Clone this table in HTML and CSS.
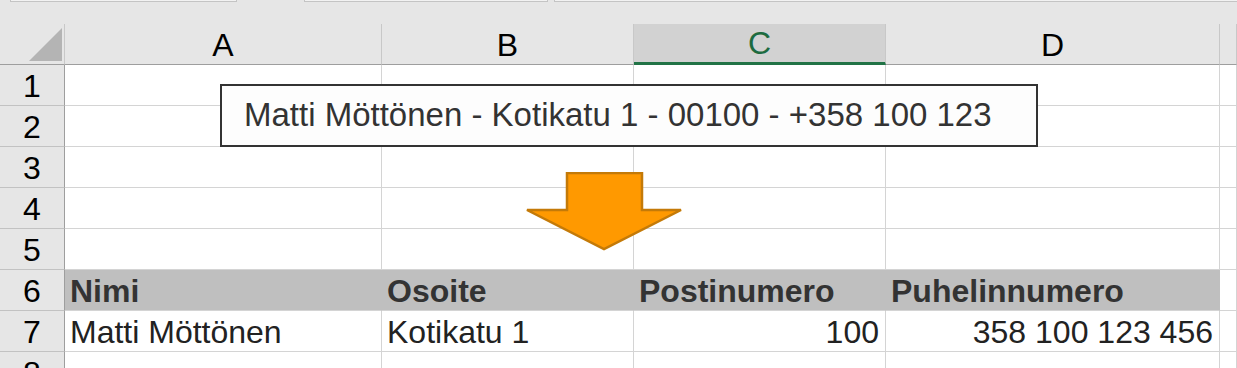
FILE: index.html
```html
<!DOCTYPE html>
<html lang="fi">
<head>
    <meta charset="UTF-8">
    <meta name="viewport" content="width=device-width, initial-scale=1.0">
    <title>Tekstin jakaminen sarakkeisiin</title>
    <link rel="stylesheet" href="styles.css">
</head>
<body>
    <div class="ribbon">
        <div class="field name-box"></div>
        <div class="field func-box"></div>
        <div class="field formula-box"></div>
    </div>
    <div class="sheet">
        <div class="grid">
            <!-- column headers -->
            <div class="corner"><span class="corner-mark"></span></div>
            <div class="col-head">A</div>
            <div class="col-head">B</div>
            <div class="col-head selected">C</div>
            <div class="col-head">D</div>
            <div class="col-head"></div>

            <div class="row-head">1</div>
            <div class="cell"></div><div class="cell"></div><div class="cell"></div><div class="cell"></div><div class="cell"></div>

            <div class="row-head">2</div>
            <div class="cell"></div><div class="cell"></div><div class="cell"></div><div class="cell"></div><div class="cell"></div>

            <div class="row-head">3</div>
            <div class="cell"></div><div class="cell"></div><div class="cell"></div><div class="cell"></div><div class="cell"></div>

            <div class="row-head">4</div>
            <div class="cell"></div><div class="cell"></div><div class="cell"></div><div class="cell"></div><div class="cell"></div>

            <div class="row-head">5</div>
            <div class="cell"></div><div class="cell"></div><div class="cell"></div><div class="cell"></div><div class="cell"></div>

            <div class="row-head">6</div>
            <div class="cell title">Nimi</div>
            <div class="cell title">Osoite</div>
            <div class="cell title">Postinumero</div>
            <div class="cell title">Puhelinnumero</div>
            <div class="cell"></div>

            <div class="row-head">7</div>
            <div class="cell">Matti Möttönen</div>
            <div class="cell">Kotikatu 1</div>
            <div class="cell num">100</div>
            <div class="cell num">358 100 123 456</div>
            <div class="cell"></div>

            <div class="row-head">8</div>
            <div class="cell"></div><div class="cell"></div><div class="cell"></div><div class="cell"></div><div class="cell"></div>
        </div>

        <div class="text-box">Matti Möttönen - Kotikatu 1 - 00100 - +358 100 123</div>

        <svg class="arrow" width="160" height="82" viewBox="0 0 160 82">
            <polygon points="42,1 117,1 117,38 156,38 79,77 2,38 42,38"
                     fill="#ff9900" stroke="#c47a08" stroke-width="2.5" stroke-linejoin="miter"/>
        </svg>
    </div>
</body>
</html>
```

FILE: styles.css
```css
body {
    margin: 0;
    padding: 0;
    overflow: hidden;
    background: #e6e6e6;
    font-family: "Liberation Sans", Arial, sans-serif;
    color: #222;
}

/* strip under the ribbon */
.ribbon {
    height: 24px;
    display: flex;
    background: #e6e6e6;
}

.field {
    height: 1px;
    background: #f2f2f2;
    border: 1px solid #c4c4c4;
    border-top: none;
}

.name-box {
    margin-left: 10px;
    width: 225px;
}

.func-box {
    margin-left: 67px;
    width: 242px;
}

.formula-box {
    margin-left: 6px;
    flex: 1;
    border-right: none;
}

.sheet {
    position: relative;
}

.grid {
    display: grid;
    grid-template-columns: 65px 317px 252px 252px 334px 1fr;
    grid-auto-rows: 41px;
    font-size: 32px;
}

.grid > div {
    box-sizing: border-box;
    display: flex;
    align-items: flex-end;
    white-space: nowrap;
    overflow: hidden;
}

.corner {
    background: #e6e6e6;
    border-right: 1px solid #c8c8c8;
    border-bottom: 1px solid #9e9e9e;
    justify-content: flex-end;
    padding: 0 2px 3px 0;
}

.corner-mark {
    width: 0;
    height: 0;
    border-left: 33px solid transparent;
    border-bottom: 33px solid #b4b4b4;
}

.col-head {
    background: #e6e6e6;
    border-right: 1px solid #c8c8c8;
    border-bottom: 1px solid #9e9e9e;
    justify-content: center;
    color: #000;
}

.col-head.selected {
    background: #d2d2d2;
    border-bottom: 3px solid #217346;
    color: #1d6b40;
}

.row-head {
    background: #e6e6e6;
    border-right: 1px solid #9e9e9e;
    border-bottom: 1px solid #c2c2c2;
    justify-content: center;
    color: #000;
}

.cell {
    background: #fff;
    border-right: 1px solid #d4d4d4;
    border-bottom: 1px solid #d4d4d4;
    padding: 0 6px 0 5px;
}

.cell.title {
    background: #bfbfbf;
    border-right-color: #bfbfbf;
    font-weight: bold;
    color: #333;
}

.cell.num {
    justify-content: flex-end;
}

.text-box {
    position: absolute;
    left: 220px;
    top: 60px;
    width: 818px;
    height: 63px;
    box-sizing: border-box;
    border: 2px solid #333;
    background: #fdfdfd;
    padding-left: 22px;
    font-size: 33px;
    line-height: 57px;
    color: #333;
    white-space: nowrap;
}

.arrow {
    position: absolute;
    left: 525px;
    top: 148px;
}
```
